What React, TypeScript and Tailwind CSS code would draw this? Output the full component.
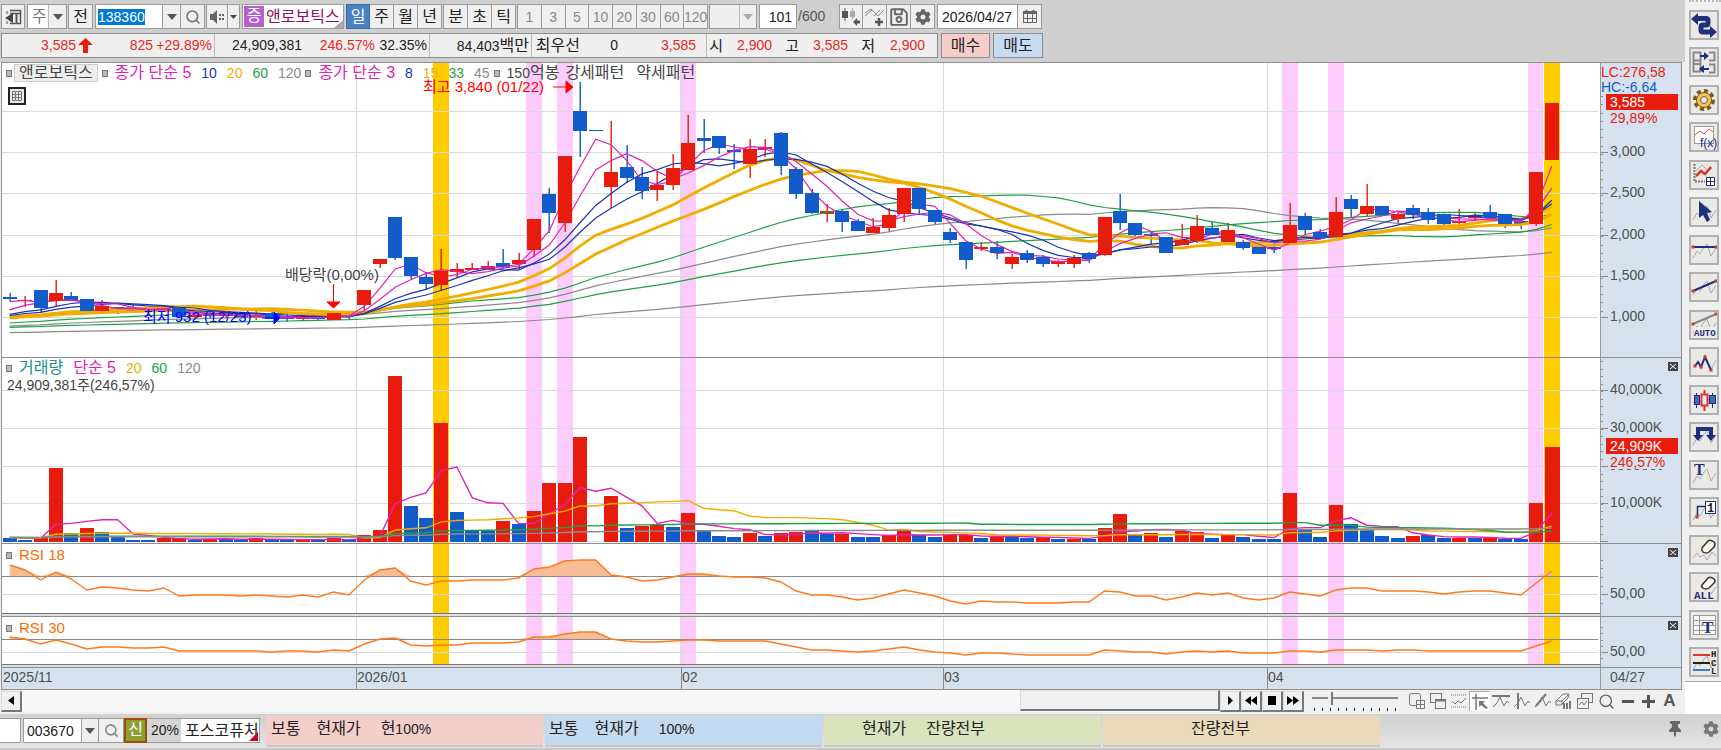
import React from 'react';
import { Search } from 'lucide-react';
import { FaCog, FaRegSave, FaThumbtack } from 'react-icons/fa';

const RED = '#e81c0c';
const BLUE = '#115bcb';

type Dir = 'r' | 'b';
type Candle = [Dir, number, number, number, number];

// direction, body top, body bottom, high, low (plot units)
const candles: Candle[] = [
  ['b', 297, 299, 293, 301], ['r', 300, 301, 296, 307], ['b', 290, 308, 290, 312], ['r', 293, 301, 280, 307],
  ['b', 296, 300, 292, 300], ['b', 299, 311, 299, 313], ['r', 306, 311, 300, 313], ['b', 307, 309, 307, 314],
  ['b', 307, 311, 304, 313], ['r', 310, 312, 309, 313], ['r', 308, 310, 305, 312], ['b', 308, 317, 308, 318],
  ['r', 315, 317, 313, 318], ['b', 313, 316, 312, 318], ['r', 313, 316, 312, 318], ['b', 314, 318, 312, 319],
  ['r', 315, 318, 308, 320], ['b', 313, 319, 309, 319], ['b', 316, 319, 314, 322], ['r', 316, 319, 315, 320],
  ['b', 315, 319, 313, 321], ['r', 313, 320, 312, 320], ['b', 314, 316, 313, 320], ['r', 290, 305, 290, 311],
  ['r', 259, 264, 259, 268], ['b', 217, 258, 217, 260], ['b', 257, 276, 257, 279], ['b', 277, 284, 272, 289],
  ['r', 271, 285, 249, 291], ['r', 269, 272, 263, 278], ['r', 268, 270, 263, 270], ['r', 266, 269, 261, 269],
  ['b', 263, 267, 249, 269], ['r', 260, 264, 253, 269], ['r', 219, 250, 219, 257], ['b', 194, 213, 188, 233],
  ['r', 156, 223, 156, 232], ['b', 111, 131, 82, 157], ['b', 130, 131, 130, 131], ['r', 172, 187, 121, 208],
  ['b', 167, 178, 145, 183], ['b', 177, 191, 167, 199], ['r', 185, 190, 171, 201], ['r', 168, 185, 154, 190],
  ['r', 143, 170, 115, 170], ['b', 138, 141, 119, 153], ['b', 136, 148, 136, 154], ['b', 150, 152, 144, 169],
  ['r', 149, 164, 139, 178], ['r', 147, 149, 139, 157], ['b', 133, 166, 132, 175], ['b', 169, 194, 167, 199],
  ['b', 193, 213, 189, 214], ['r', 211, 214, 204, 222], ['b', 211, 222, 210, 232], ['b', 221, 231, 219, 231],
  ['r', 227, 233, 218, 233], ['r', 215, 228, 208, 232], ['r', 188, 214, 188, 222], ['b', 188, 209, 188, 214],
  ['b', 210, 222, 210, 225], ['b', 232, 240, 228, 243], ['b', 242, 260, 242, 269], ['r', 247, 249, 242, 251],
  ['b', 247, 253, 241, 259], ['r', 257, 264, 254, 269], ['b', 253, 260, 250, 263], ['b', 257, 264, 255, 267],
  ['r', 261, 264, 260, 267], ['r', 258, 264, 255, 268], ['b', 253, 259, 252, 263], ['r', 217, 255, 217, 256],
  ['b', 211, 223, 194, 230], ['b', 223, 235, 223, 236], ['b', 234, 236, 231, 247], ['b', 237, 253, 237, 253],
  ['r', 240, 245, 224, 245], ['r', 226, 241, 215, 243], ['b', 228, 235, 221, 235], ['r', 230, 242, 223, 242],
  ['b', 242, 248, 240, 250], ['b', 247, 254, 246, 254], ['b', 247, 249, 244, 253], ['r', 225, 243, 203, 245],
  ['b', 216, 230, 213, 235], ['b', 232, 238, 229, 238], ['r', 212, 237, 197, 237], ['b', 199, 209, 195, 218],
  ['r', 206, 214, 184, 216], ['b', 206, 215, 206, 215], ['r', 214, 219, 211, 224], ['b', 208, 215, 205, 219],
  ['b', 212, 220, 208, 224], ['b', 214, 224, 214, 226], ['r', 221, 223, 209, 227], ['r', 216, 218, 212, 221],
  ['b', 212, 218, 205, 219], ['b', 214, 224, 214, 228], ['b', 221, 224, 219, 229], ['r', 172, 224, 172, 226],
  ['r', 103, 160, 103, 160],
];

const volumeDirs =
  'bbrrbrbbbbrrbrbbrbbrbrbrrrbbrbbbrbrrrrbrbrrbrbbbrbrrbbrbbrrbbrrbrbbrbrbrrbrbrrbrbbbrbbrbbbbrbbrbrbbrr';
const volumes = [
  4, 2, 4, 74, 9, 14, 10, 5, 2, 2, 4, 4, 2, 3, 3, 2, 4, 2, 2, 2, 2, 4, 2, 7, 12, 166, 36, 24, 119, 30, 12, 11, 21, 18,
  31, 59, 59, 105, 0, 46, 14, 16, 17, 15, 29, 12, 6, 5, 9, 6, 9, 10, 11, 8, 8, 5, 5, 7, 11, 7, 5, 7, 7, 4, 6, 5, 4, 5,
  3, 3, 3, 14, 28, 7, 9, 5, 11, 10, 4, 7, 5, 3, 3, 49, 12, 5, 37, 18, 12, 6, 4, 6, 7, 4, 4, 4, 4, 3, 3, 39, 95,
];

const rsi18 = [
  565, 570, 580, 572, 579, 590, 587, 588, 590, 591, 588, 596, 595, 595, 595, 596, 595, 596, 597, 595, 597, 592, 595,
  580, 570, 568, 581, 585, 581, 581, 580, 580, 580, 578, 569, 567, 561, 560, 560, 575, 577, 581, 580, 577, 574, 574,
  576, 577, 577, 578, 582, 591, 595, 595, 597, 600, 598, 594, 590, 593, 596, 601, 604, 601, 602, 602, 603, 603, 603,
  602, 602, 591, 592, 596, 596, 600, 597, 593, 595, 593, 598, 600, 598, 592, 594, 596, 590, 588, 588, 591, 591, 591,
  592, 594, 592, 591, 591, 593, 595, 583, 571,
];
const rsi30 = [
  637, 639, 644, 640, 644, 649, 647, 647, 648, 648, 647, 651, 651, 651, 651, 651, 651, 652, 651, 651, 652, 650, 651,
  644, 639, 638, 645, 646, 645, 645, 643, 643, 643, 642, 637, 637, 634, 632, 632, 639, 641, 642, 642, 641, 640, 640,
  641, 641, 641, 641, 644, 647, 650, 650, 651, 652, 651, 649, 647, 650, 652, 653, 655, 653, 653, 654, 655, 655, 655,
  655, 655, 650, 651, 652, 652, 654, 652, 651, 652, 651, 653, 653, 653, 651, 651, 652, 650, 650, 650, 651, 650, 650,
  651, 651, 651, 651, 651, 651, 651, 646, 641,
];

const barX = (i: number) => 9.7 + i * 15.42;
const points = (ys: number[]) => ys.map((y, i) => `${barX(i).toFixed(1)},${y.toFixed(1)}`).join(' ');

const movingAverage = (history: number[], values: number[], span: number) => {
  const all = [...history, ...values];
  return values.map((_, i) => {
    const end = history.length + i + 1;
    return all.slice(end - span, end).reduce((a, b) => a + b, 0) / span;
  });
};

const closes = candles.map(([dir, top, bottom]) => (dir === 'r' ? top : bottom));
const priceHistory = [
  ...Array(60).fill(338), ...Array(15).fill(331), ...Array(12).fill(335), ...Array(13).fill(332),
  ...Array(13).fill(320), 322, 322, 322, 322, 322, 304, 302,
];
const volumeHistory = Array(120).fill(4.5);

const priceAverages: [number, string, number][] = [
  [120, '#8a8a8a', 1], [45, '#8a8a8a', 1], [60, '#1fa045', 1], [33, '#1fa045', 1], [20, '#f0ad00', 3],
  [15, '#f0ad00', 3], [10, '#1a34b0', 1], [8, '#1a34b0', 1], [5, '#e023b5', 1], [3, '#e023b5', 1],
];
const volumeAverages: [number, string][] = [[5, '#e023b5'], [20, '#f0ad00'], [60, '#1fa045'], [120, '#8a8a8a']];

const bands: [number, string][] = [
  [28, '#ffcc00'], [34, '#fdccfd'], [36, '#fdccfd'], [44, '#fdccfd'], [83, '#fdccfd'], [86, '#fdccfd'],
  [99, '#fdccfd'], [100, '#ffcc00'],
];
const months = [
  { x: 356, label: '2026/01' },
  { x: 681, label: '02' },
  { x: 943, label: '03' },
  { x: 1267, label: '04' },
];

interface PaneProps {
  top: number;
  height: number;
  grid: number[];
  ticks: number[];
  labels: [number, string][];
  first?: boolean;
  legend: React.ReactNode;
  axis?: React.ReactNode;
  children: React.ReactNode;
}

const Pane: React.FC<PaneProps> = ({ top, height, grid, ticks, labels, first, legend, axis, children }) => (
  <div className={first ? 'flex' : 'flex border-t border-[#8e8e8e]'}>
    <div className="relative flex-1 min-w-0 bg-white">
      <svg className="block w-full" height={height} viewBox={`2 ${top} 1598 ${height}`} preserveAspectRatio="none">
        {bands.map(([i, color]) => (
          <rect key={i} x={Math.round(barX(i) - 8)} y={top} width={i === 99 ? 15 : 16} height={height} fill={color} />
        ))}
        {grid.map((y) => <rect key={y} x={2} y={y} width={1596} height={1} fill="#d9d9d9" />)}
        {months.map((m) => <rect key={m.x} x={m.x} y={top} width={1} height={height} fill="#d9d9d9" />)}
        {children}
      </svg>
      {legend}
    </div>
    <div className="relative w-[81px] shrink-0 bg-[#d6e1ef] border-l border-[#9a9a9a]">
      <svg className="block" width={80} height={height} viewBox={`1601 ${top} 80 ${height}`} fontSize={14}>
        {ticks.map((y) => <rect key={y} x={1601} y={y} width={2} height={1} fill="#8a8a8a" />)}
        {labels.map(([y, text]) => (
          <g key={y}>
            <rect x={1601} y={y} width={7} height={1} fill="#8a8a8a" />
            <text x={1610} y={y + 4} fill="#505050">{text}</text>
          </g>
        ))}
        {axis}
      </svg>
      {!first && (
        <button aria-label="닫기" className="absolute right-[3px] top-1 w-[10px] h-[9px] bg-[#444] flex items-center justify-center">
          <svg width="6" height="5" viewBox="0 0 6 5" stroke="#fff"><path d="M0 0L6 5M6 0L0 5" /></svg>
        </button>
      )}
    </div>
  </div>
);

const Box = () => <i className="block w-[6px] h-[7px] border border-[#777] bg-[#bbb] shrink-0" />;

const Rsi = ({ values, level }: { values: number[]; level: number }) => (
  <>
    <polygon
      points={`${barX(0)},${level} ${points(values.map((v) => Math.min(v, level)))} ${barX(100)},${level}`}
      fill="#f6bd97"
    />
    <rect x={2} y={level} width={1596} height={1} fill="#8a8a8a" />
    <polyline points={points(values)} fill="none" stroke="#ff7a1a" strokeWidth={1.4} />
  </>
);

const steps = (from: number, to: number, gap: number) => {
  const out: number[] = [];
  for (let y = from; y <= to; y += gap) out.push(Math.round(y));
  return out;
};

const Chart = () => (
  <section className="ml-px mr-[3px] border border-[#8e8e8e]">
    <Pane
      first
      top={63}
      height={294}
      grid={[111, 152, 193, 235, 276, 317]}
      ticks={steps(96, 317, 8.25)}
      labels={[[152, '3,000'], [193, '2,500'], [235, '2,000'], [276, '1,500'], [317, '1,000']]}
      axis={
        <>
          <text x={1601} y={77} fill={RED}>LC:276,58</text>
          <text x={1601} y={92} fill={BLUE}>HC:-6,64</text>
          <text x={1610} y={123} fill={RED}>29,89%</text>
          <rect x={1606} y={94} width={72} height={16} fill={RED} />
          <text x={1610} y={107} fill="#fff">3,585</text>
        </>
      }
      legend={
        <>
          <div className="absolute left-1 top-[2px] h-4 flex items-center whitespace-pre text-[14px] leading-4 text-[#444]">
            <Box />
            <span className="ml-[2px] mr-1 px-1 h-[18px] leading-4 border border-[#ccc] bg-[#eee] text-[16px]">앤로보틱스</span>
            <Box />
            <span className="ml-[7px] text-[16px] text-[#e023b5]">종가 단순 5</span>
            <span className="ml-[10px] text-[#1a34b0]">10</span>
            <span className="ml-[10px] text-[#f0ad00]">20</span>
            <span className="ml-[10px] text-[#1fa045]">60</span>
            <span className="ml-[10px] mr-1 text-[#8a8a8a]">120</span>
            <Box />
            <span className="ml-[7px] text-[16px] text-[#e023b5]">종가 단순 3</span>
            <span className="ml-[10px] text-[#1a34b0]">8</span>
            <span className="ml-[10px] text-[#f0ad00]">15</span>
            <span className="ml-[10px] text-[#1fa045]">33</span>
            <span className="ml-[10px] mr-1 text-[#8a8a8a]">45</span>
            <Box />
            <span className="ml-[7px]">150</span>
            <span className="text-[16px]">억봉</span>
            <span className="ml-[6px] text-[16px]">강세패턴</span>
            <span className="ml-3 text-[16px]">약세패턴</span>
          </div>
          <button aria-label="표 보기" className="absolute left-[6px] top-6 w-[18px] h-[18px] border-2 border-[#222] bg-[#e8e8e8]">
            <svg width="14" height="14" viewBox="0 0 14 14" stroke="#777" fill="none">
              <path d="M2.5 2.5H11.5V11.5H2.5ZM5.5 2V12M8.5 2V12M2 5.5H12M2 8.5H12" />
            </svg>
          </button>
        </>
      }
    >
      {candles.map(([dir, top, bottom, high, low], i) => (
        <g key={i} fill={dir === 'r' ? RED : BLUE}>
          <rect x={Math.round(barX(i)) - 0.5} y={high} width={1.4} height={low - high} />
          <rect x={Math.round(barX(i) - 7)} y={top} width={14} height={Math.max(bottom - top, 1)} />
        </g>
      ))}
      {priceAverages.map(([span, color, width]) => (
        <polyline
          key={span}
          points={points(movingAverage(priceHistory, closes, span))}
          fill="none"
          stroke={color}
          strokeWidth={width === 3 ? 2.8 : 1.2}
        />
      ))}
      {candles.map(([dir, top, bottom], i) =>
        bottom - top > 4 ? (
          <rect key={i} x={Math.round(barX(i) - 7)} y={top} width={14} height={bottom - top} fill={dir === 'r' ? RED : BLUE} />
        ) : null,
      )}
      <text x={423} y={92} fontSize={15} fill="#f00">최고 3,840 (01/22)</text>
      <path d="M553 87H567M566 81L573 87L566 93Z" fill="#f00" stroke="#f00" />
      <text x={285} y={280} fontSize={15} fill="#444">배당락(0,00%)</text>
      <path d="M333.5 284V303M327 302H340L333.5 308Z" fill="#f00" stroke="#f00" />
      <text x={143} y={322} fontSize={15} fill="#00f">최저 932 (12/23)</text>
      <path d="M262 318H275M274 312L280 318L274 324Z" fill="#00f" stroke="#00f" />
    </Pane>

    <Pane
      top={358}
      height={185}
      grid={[390, 428, 466, 503, 541]}
      ticks={steps(361, 541, 7.5)}
      labels={[[390, '40,000K'], [428, '30,000K'], [503, '10,000K']]}
      axis={
        <>
          <rect x={1606} y={438} width={72} height={16} fill={RED} />
          <text x={1610} y={451} fill="#fff">24,909K</text>
          <text x={1610} y={467} fill={RED}>246,57%</text>
          <rect x={1601} y={466} width={7} height={1} fill="#8a8a8a" />
          <path d="M1611 469.5H1662" stroke="#666" strokeDasharray="4 4" />
          <rect x={1601} y={541} width={7} height={1} fill="#8a8a8a" />
        </>
      }
      legend={
        <>
          <div className="absolute left-1 top-[2px] h-4 flex items-center text-[14px] leading-4">
            <Box />
            <span className="ml-[7px] text-[16px] text-[#209090]">거래량</span>
            <span className="ml-[10px] text-[16px] text-[#e023b5]">단순 5</span>
            <span className="ml-[10px] text-[#f0ad00]">20</span>
            <span className="ml-[10px] text-[#1fa045]">60</span>
            <span className="ml-[10px] text-[#8a8a8a]">120</span>
          </div>
          <div className="absolute left-[5px] top-[19px] text-[14px] leading-4 text-[#444]">24,909,381주(246,57%)</div>
        </>
      }
    >
      {volumes.map((h, i) => (
        <rect
          key={i}
          x={Math.round(barX(i) - 7)}
          y={542 - h}
          width={i === 100 ? 15 : 14}
          height={h}
          fill={volumeDirs[i] === 'r' ? RED : BLUE}
        />
      ))}
      {volumeAverages.map(([span, color]) => (
        <polyline
          key={span}
          points={points(movingAverage(volumeHistory, volumes, span).map((v) => 542 - v))}
          fill="none"
          stroke={color}
          strokeWidth={1.4}
        />
      ))}
    </Pane>

    <Pane
      top={544}
      height={72}
      grid={[594]}
      ticks={[560, 568, 577, 586, 603]}
      labels={[[594, '50,00']]}
      legend={
        <div className="absolute left-1 top-[3px] h-4 flex items-center gap-[7px] text-[15px] leading-4 text-[#ff6a00]">
          <Box />RSI 18
        </div>
      }
    >
      <Rsi values={rsi18} level={576} />
      <rect x={2} y={613} width={1598} height={1} fill="#777" />
      <rect x={2} y={614} width={1598} height={2} fill="#ddd" />
    </Pane>

    <Pane
      top={617}
      height={50}
      grid={[652]}
      ticks={[627, 633, 640, 646, 658]}
      labels={[[652, '50,00']]}
      legend={
        <div className="absolute left-1 top-[3px] h-4 flex items-center gap-[7px] text-[15px] leading-4 text-[#ff6a00]">
          <Box />RSI 30
        </div>
      }
    >
      <Rsi values={rsi30} level={639} />
      <rect x={2} y={664} width={1598} height={1} fill="#777" />
      <rect x={2} y={665} width={1598} height={2} fill="#ddd" />
    </Pane>

    <div className="flex border-t border-[#8e8e8e] bg-[#d6e1ef]">
      <svg className="block flex-1 min-w-0" height={21} viewBox="2 0 1598 21" preserveAspectRatio="none" fontSize={14} fill="#505050">
        <text x={3} y={14}>2025/11</text>
        {months.map((m) => (
          <g key={m.x}>
            <rect x={m.x} y={0} width={1} height={21} fill="#8a8a8a" />
            <text x={m.x + 1} y={14}>{m.label}</text>
          </g>
        ))}
      </svg>
      <div className="w-[81px] border-l border-[#9a9a9a] pl-[9px] text-[14px] leading-[19px] text-[#505050]">04/27</div>
    </div>
  </section>
);

const btn = 'h-full border border-[#9b9b9b] bg-[#efefef] flex items-center justify-center text-[16px] leading-none shrink-0';

const Arrow = ({ color = '#555' }: { color?: string }) => (
  <svg width="10" height="6" viewBox="0 0 10 6"><path d="M0 0H10L5 6Z" fill={color} /></svg>
);

const Toolbar = () => (
  <div className="h-[25px] flex text-[#222]">
    <button aria-label="패널" className={`${btn} w-6 ml-px`}>
      <svg width="17" height="18" viewBox="0 0 17 18" fill="none" stroke="#555">
        <path d="M5 2.5H15.5V15.5H5M5 5.5H15" strokeWidth="1.5" /><path d="M11.5 6V15" strokeWidth="2" />
        <path d="M0 10L8 5V15Z" fill="#444" stroke="none" /><path d="M2 3V6M2 13V16" />
      </svg>
    </button>
    <div className="relative ml-[2px] w-10 shrink-0">
      <select aria-label="종류" className="appearance-none w-full h-full border border-[#9b9b9b] bg-white pl-1 text-[16px] leading-none text-[#777]">
        <option>주</option>
      </select>
      <span className="absolute right-px top-px bottom-px w-[18px] border-l border-[#bbb] bg-[#efefef] flex items-center justify-center pointer-events-none"><Arrow /></span>
    </div>
    <button className={`${btn} w-[25px] ml-px`}>전</button>
    <div className="ml-[2px] flex h-full">
      <label className="w-[68px] h-full border border-[#9b9b9b] bg-white flex items-center pl-[2px]">
        <input aria-label="종목코드" defaultValue="138360" className="w-[47px] h-[16px] bg-[#0078d7] text-white text-[14px] leading-none" />
      </label>
      <button aria-label="목록" className={`${btn} w-[18px] border-l-0`}><Arrow /></button>
      <button aria-label="검색" className={`${btn} w-6 border-l-0`}><Search size={16} color="#777" strokeWidth={2.5} /></button>
    </div>
    <div className="ml-px flex h-full">
      <button aria-label="소리" className={`${btn} w-[22px]`}>
        <svg width="16" height="14" viewBox="0 0 16 14" fill="#666">
          <path d="M1 4H4L8 0V14L4 10H1Z" /><path d="M10 4h2v2h-2zM10 8h2v2h-2zM13 4h2v2h-2zM13 8h2v2h-2z" />
        </svg>
      </button>
      <button aria-label="소리 설정" className={`${btn} w-3 border-l-0`}>
        <svg width="7" height="4" viewBox="0 0 7 4"><path d="M0 0H7L3.5 4Z" fill="#444" /></svg>
      </button>
    </div>
    <div className="relative ml-[2px] w-[102px] border border-[#9b9b9b] bg-white flex items-center gap-[2px] shrink-0">
      <span className="ml-px w-5 h-[21px] bg-[#b65fcf] text-white text-[16px] leading-5 text-center">증</span>
      <span className="text-[16px] leading-5 text-[#8b1157] whitespace-nowrap">앤로보틱스</span>
      <svg className="absolute right-0 bottom-0" width="9" height="8" viewBox="0 0 9 8"><path d="M9 0V8H0Z" fill="#aaa" /></svg>
    </div>
    <div className="ml-[2px] flex h-full">
      <button className="w-6 h-full border border-[#3c6ba8] bg-[#4a80c4] text-white text-[16px] leading-none">일</button>
      {['주', '월', '년'].map((t) => <button key={t} className={`${btn} w-6 border-l-0`}>{t}</button>)}
    </div>
    <div className="ml-px flex h-full">
      {['분', '초', '틱'].map((t) => <button key={t} className={`${btn} w-6 border-r-0 last:border-r last:w-[25px]`}>{t}</button>)}
    </div>
    <div className="ml-px flex h-full w-[191px]">
      {['1', '3', '5', '10', '20', '30', '60', '120'].map((t) => (
        <button key={t} className="flex-1 min-w-0 h-full border border-r-0 last:border-r border-[#9b9b9b] bg-[#efefef] text-[14px] leading-none text-[#888] flex items-center justify-center">{t}</button>
      ))}
    </div>
    <div className="relative ml-px w-12 shrink-0">
      <select aria-label="주기" disabled className="appearance-none w-full h-full border border-[#9b9b9b] bg-[#efefef]"><option /></select>
      <span className="absolute right-px top-px bottom-px w-[17px] border-l border-[#bbb] flex items-center justify-center pointer-events-none"><Arrow color="#aaa" /></span>
    </div>
    <input aria-label="조회 개수" defaultValue="101" className="ml-[2px] w-[38px] h-full border border-[#9b9b9b] bg-white text-[14px] text-right pr-1" />
    <span className="w-[42px] pl-px text-[14px] leading-[25px] text-[#555]">/600</span>
    <div className="flex h-full">
      <button aria-label="봉 추가" className={`${btn} w-6`}>
        <svg width="20" height="20" viewBox="0 0 20 20" fill="#555">
          <path d="M1 4h6v7H1zM3.5 1h1v13h-1z" /><path d="M9 4h5v6H9zM11 1h1v11h-1z" fill="#aaa" /><path d="M12 15L16 11V13.5H19V16.5H16V19Z" />
        </svg>
      </button>
      <button aria-label="지표 추가" className={`${btn} w-6 border-l-0`}>
        <svg width="20" height="20" viewBox="0 0 20 20" fill="none" stroke="#888">
          <path d="M0 6L6 2L13 9L19 3M0 9L7 3M9 9L15 3" /><path d="M14 11V19M10 15H18" stroke="#555" strokeWidth="2.5" />
        </svg>
      </button>
      <button aria-label="저장" className={`${btn} w-6 border-l-0`}><FaRegSave size={20} color="#666" /></button>
      <button aria-label="설정" className={`${btn} w-6 border-l-0`}><FaCog size={16} color="#666" /></button>
    </div>
    <input aria-label="날짜" defaultValue="2026/04/27" className="ml-[2px] w-[81px] h-full border border-[#9b9b9b] bg-white text-[14px] pl-1" />
    <button aria-label="달력" className={`${btn} w-6 border-l-0`}>
      <svg width="14" height="13" viewBox="0 0 14 13" fill="none" stroke="#666">
        <path d="M0 2.5H14" strokeWidth="3" /><path d="M.5 3V12.5H13.5V3M4.5 4V12M9.500 4V12M1 8.5H13" /><path d="M3.5 0V2M10.5 0V2" strokeWidth="2" />
      </svg>
    </button>
  </div>
);

const Quote = () => (
  <div className="h-[25px] flex text-[14px] leading-[23px] text-[#222]">
    <div className="ml-px h-full border border-[#8c8c8c] bg-[#efefef] flex text-right whitespace-nowrap shrink-0 w-[937px]">
      <span className="w-[74px] text-[#e8281a]">3,585</span>
      <svg className="mt-1 ml-[2px]" width="15" height="15" viewBox="0 0 15 15"><path d="M7.5 0L15 7H10V15H5V7H0Z" fill={RED} /></svg>
      <span className="w-[60px] text-[#e8281a]">825</span>
      <span className="w-[62px] pr-[2px] border-r border-[#bbb] text-[#e8281a]">+29.89%</span>
      <span className="w-[87px]">24,909,381</span>
      <span className="w-[73px] text-[#e8281a]">246.57%</span>
      <span className="w-[55px] pr-[2px] border-r border-[#bbb]">32.35%</span>
      <span className="w-[102px] pr-[2px] border-r border-[#bbb]">84,403<span className="text-[16px]">백만</span></span>
      <span className="w-[48px] text-[16px]">최우선</span>
      <span className="w-[38px]">0</span>
      <span className="w-[89px] pr-[10px] border-r border-[#bbb] text-[#e8281a]">3,585</span>
      <span className="w-4 text-[15px]">시</span>
      <span className="w-[49px] text-[#e8281a]">2,900</span>
      <span className="w-[27px] text-[15px]">고</span>
      <span className="w-[49px] text-[#e8281a]">3,585</span>
      <span className="w-[27px] text-[15px]">저</span>
      <span className="w-[50px] text-[#e8281a]">2,900</span>
    </div>
    <button className="ml-[3px] w-[49px] border border-[#8c8c8c] bg-[#f5cec9] text-[16px] leading-none shrink-0">매수</button>
    <button className="ml-[3px] w-[50px] border border-[#8c8c8c] bg-[#c6dcf2] text-[16px] leading-none shrink-0">매도</button>
  </div>
);

const NAVY = '#1d2f7d';
const wave = <path d="M3 22L7 15L10 18L14 11L17 8L21 20L26 12" stroke="#aaa" />;
const dots = (pairs: number[][]) =>
  pairs.map(([x, y]) => <rect key={`${x}-${y}`} x={x - 1.5} y={y - 1.5} width={3} height={3} fill="#d33" stroke="none" />);

const tools: [string, React.ReactNode][] = [
  ['전환', <><path d="M7 7.5H16Q18 7.5 18 10V12Q18 14 16 14H13Q11 14 11 16V19Q11 21 13 21H21" stroke={NAVY} strokeWidth="5" /><path d="M1 8L8 2V14ZM27 21L20 15V27Z" fill={NAVY} stroke="none" /></>],
  ['교환', <><path d="M3.5 4.5H10.5V23.5H3.5ZM3 12.5H10M3 16H10M19 4.5H24.5V12.5H19M19 16.5H24.5V24.5H19" stroke="#888" strokeWidth="2" /><path d="M10 8H16M13 21H19" stroke={NAVY} strokeWidth="2" /><path d="M19 8L14 4V12ZM9 21L14 17V25Z" fill={NAVY} stroke="none" /></>],
  ['환경설정', <><circle cx="14" cy="14" r="9" stroke="#7a5a20" strokeWidth="4" strokeDasharray="4 3" /><circle cx="14" cy="14" r="7.5" fill="#f7bf55" stroke="#7a5a20" /><circle cx="14" cy="14" r="3.5" fill="#eee" stroke="#7a5a20" /></>],
  ['수식', <><rect x="4.5" y="3.5" width="19" height="17" fill="#fff" stroke="#999" /><path d="M5 12L10 8L14 11L19 6L23 9" stroke="#e55" /><text x="10" y="24" fontSize="12" fill={NAVY} stroke="none">f(x)</text></>],
  ['차트추가', <><path d="M4.5 3V20.5H15" stroke="#777" strokeWidth="2" strokeDasharray="2 1" /><path d="M6 10L12 4L18 10L22 7" stroke="#aaa" /><path d="M6 15L11 10L15 13L21 6" stroke="#d33" strokeWidth="2.5" /><path d="M16.5 16.5H24.5V24.5H16.5ZM20.5 16V25M16 20.5H25" stroke={NAVY} fill="#fff" /></>],
  ['선택', <>{wave}<path d="M9 3V20L13 17L17 24L20 22L17 15L22 14Z" fill={NAVY} stroke="none" /></>],
  ['수평선', <>{wave}<path d="M3 11H26" stroke={NAVY} strokeWidth="2" />{dots([[3, 11], [26, 11]])}</>],
  ['추세선', <>{wave}<path d="M3 18L26 8" stroke={NAVY} strokeWidth="2" />{dots([[3, 18], [26, 8]])}</>],
  ['자동추세선', <>{wave}<path d="M3 13L26 3" stroke="#888" strokeWidth="2" />{dots([[3, 13], [26, 3]])}<rect x="4" y="16" width="22" height="10" fill="#eee" stroke="none" /><text x="4" y="25" fontSize="9" fontWeight="bold" fill={NAVY} stroke="none" fontFamily="Liberation Mono">AUTO</text></>],
  ['파동', <><path d="M21 22L26 12" stroke="#aaa" /><path d="M5 18L8 14L11 19L15 9L21 22" stroke={NAVY} strokeWidth="2" />{dots([[5, 18], [11, 19], [15, 9], [21, 22]])}</>],
  ['봉', <><path d="M3 17L26 12" stroke="#aaa" /><path d="M6.500 7V22M22.500 7V22" stroke={NAVY} /><rect x="4.5" y="9.5" width="5" height="9" fill="#4866c0" stroke={NAVY} /><rect x="19.5" y="9.5" width="6" height="8" fill="#4866c0" stroke={NAVY} /><path d="M14.5 4V8M14.5 20V25M11.5 8.5H17.5V19.5H11.5Z" stroke="#d33" strokeWidth="2" fill="#eee" /></>],
  ['되돌림', <>{wave}<path d="M8 13V6H21V13" stroke={NAVY} strokeWidth="4" /><path d="M3 12H13L8 18ZM16 12H26L21 18Z" fill={NAVY} stroke="none" /></>],
  ['문자', <>{wave}<text x="4" y="14" fontSize="16" fontWeight="bold" fill={NAVY} stroke="none" fontFamily="Liberation Serif">T</text></>],
  ['번호', <>{wave}<path d="M7.5 19V8.5H16" stroke={NAVY} strokeWidth="1.5" />{dots([[7, 19]])}<rect x="15.5" y="3.5" width="10" height="12" fill="#fff" stroke={NAVY} /><text x="17" y="14" fontSize="12" fontWeight="bold" fill="#222" stroke="none" fontFamily="Liberation Mono">1</text></>],
  ['지우개', <><path d="M3 22L7 17L10 21L14 19L17 24L22 16L26 20" stroke="#aaa" /><path d="M12 12L18 5Q20 3 24 6Q26 8 24 11L19 16Q16 18 13 16Q11 14 12 12Z" fill="#fffdf0" stroke="#333" strokeWidth="1.5" /></>],
  ['모두 지우기', <><path d="M12 12L18 5Q20 3 24 6Q26 8 24 10L19 15Q16 17 13 15Q11 14 12 12Z" fill="#fffdf0" stroke="#333" strokeWidth="1.5" /><path d="M21 21L26 14" stroke="#aaa" /><text x="4" y="26" fontSize="11" fontWeight="bold" fill={NAVY} stroke="none" fontFamily="Liberation Mono">ALL</text></>],
  ['표', <><path d="M3.5 4.5H25.5V23.5H3.5ZM3 9.5H25M3 14.5H25M3 19.5H25M9.5 4V23" stroke="#999" fill="#f8f8f8" /><text x="12" y="22" fontSize="17" fontWeight="bold" fill={NAVY} stroke="none" fontFamily="Liberation Serif">T</text></>],
  ['고저종', <>{wave}<path d="M3 7H20" stroke="#d33" strokeWidth="2" /><path d="M3 15H20" stroke="#222" strokeWidth="2" /><path d="M3 22H20" stroke="#3c7fc0" strokeWidth="2" /><text fontSize="9" fontWeight="bold" fill="#222" stroke="none" fontFamily="Liberation Mono"><tspan x="21" y="9">H</tspan><tspan x="21" y="18">C</tspan><tspan x="21" y="26">L</tspan></text></>],
];

const SideTools = () => (
  <aside className="w-9 shrink-0 flex flex-col bg-[#f0f0f0]">
    <div className="relative flex-1 pt-[10px] pb-1 pl-1 flex flex-col justify-between border-b border-[#aaa]">
      <i className="absolute left-1 right-0 top-0 border-t-2 border-dotted border-[#bbb]" />
      {tools.map(([name, icon]) => (
        <button key={name} aria-label={name} className="w-[30px] h-[30px] border-2 border-[#b0b0b0] bg-[#eae9e6]">
          <svg width="26" height="26" viewBox="1 1 26 26" fill="none">{icon}</svg>
        </button>
      ))}
    </div>
    <div className="h-8 bg-white" />
  </aside>
);

const miniWave = <path d="M1 15L5 11L8 5L12 14L15 9L17 11" />;
const miniIcons: [string, React.ReactNode][] = [
  ['새 창', <><rect x="1.5" y="1.5" width="11" height="12" rx="2" /><path d="M8.5 8.5H16.5V16.5H8.5ZM12.5 8V17M8 12.5H17" fill="#f0f0f0" /></>],
  ['창 복제', <><rect x="1.5" y="1.5" width="11" height="9" /><rect x="6.5" y="7.5" width="10" height="9" fill="#f0f0f0" /><path d="M6 8.5H17" strokeWidth="2" /></>],
  ['구간', <><path d="M1 3H17M1 15H17" strokeDasharray="1 1" /><path d="M2 9L5 12L8 9L11 11L16 6" /></>],
  ['십자선', <><path d="M1 5H17M5 1V17" strokeWidth="1.5" /><path d="M8 8H14L12 10L17 15L15 16L10 12L8 14Z" fill="#777" stroke="none" /></>],
  ['가로선', <><path d="M0 4H18" strokeWidth="2" />{miniWave}</>],
  ['세로선', <><path d="M5 1V17" strokeWidth="2" />{miniWave}</>],
  ['사선', <><path d="M2 14L12 2" strokeWidth="2" />{miniWave}</>],
  ['전체 삭제', <><path d="M1 9L8 2H14L13 6L6 13H1ZM1 9H7L13 3M7 9V13" /><path d="M9 11V17M12 11V17M15 9V17" strokeWidth="2" /></>],
  ['겹쳐보기', <><rect x="5.5" y="1.5" width="11" height="9" /><rect x="1.5" y="6.5" width="11" height="10" fill="#f0f0f0" /><path d="M3 13L6 10L8 13L11 9" /></>],
];

const ScrollRow = () => (
  <div className="ml-px mr-[3px] pr-[2px] h-6 pb-[2px] flex items-center bg-[#f0f0f0]">
    <button aria-label="왼쪽" className="w-[21px] h-[21px] border border-[#ddd] border-r-[#777] border-b-[#777] border-r-2 border-b-2 flex items-center justify-center">
      <svg width="6" height="9" viewBox="0 0 6 9"><path d="M6 0V9L0 4.5Z" /></svg>
    </button>
    <div className="flex-1 h-full bg-[#f8f8f8] flex justify-end">
      <div className="w-[200px] h-[21px] border border-[#ddd] border-r-2 border-b-2 border-r-[#777] border-b-[#777] bg-[#f0f0f0]" />
    </div>
    {[
      ['재생', 'M4 0V9L9 4.5Z'],
      ['뒤로', 'M6 0V9L0 4.5ZM12 0V9L6 4.5Z'],
      ['정지', 'M2 0H10V9H2Z'],
      ['앞으로', 'M0 0V9L6 4.5ZM6 0V9L12 4.5Z'],
    ].map(([name, d]) => (
      <button key={name} aria-label={name} className="w-[21px] h-[21px] border border-[#ddd] border-r-2 border-b-2 border-r-[#777] border-b-[#777] flex items-center justify-center">
        <svg width="12" height="9" viewBox="0 0 12 9"><path d={d} /></svg>
      </button>
    ))}
    <div className="ml-2 w-[86px] h-[20px] flex flex-col justify-between">
      <input
        type="range"
        aria-label="속도"
        min={0}
        max={10}
        defaultValue={2}
        className="block w-full h-[14px] appearance-none bg-transparent [&::-webkit-slider-runnable-track]:h-[2px] [&::-webkit-slider-runnable-track]:bg-[#888] [&::-webkit-slider-thumb]:appearance-none [&::-webkit-slider-thumb]:w-[5px] [&::-webkit-slider-thumb]:h-[13px] [&::-webkit-slider-thumb]:-mt-[5px] [&::-webkit-slider-thumb]:bg-[#eee] [&::-webkit-slider-thumb]:border-r-2 [&::-webkit-slider-thumb]:border-[#777]"
      />
      <div className="flex justify-between px-[2px]">
        {steps(0, 10, 1).map((n) => <i key={n} className="w-px h-[3px] bg-[#222]" />)}
      </div>
    </div>
    <div className="ml-2 flex items-center">
      {miniIcons.map(([name, icon]) => (
        <button key={name} aria-label={name} className={name === '십자선' ? 'w-[21px] h-5 bg-white border-t border-l border-[#aaa]' : 'w-[21px] h-5'}>
          <svg className="m-auto" width="18" height="18" viewBox="0 0 18 18" fill="none" stroke="#777">{icon}</svg>
        </button>
      ))}
      <button aria-label="확대경" className="w-[22px]"><Search className="m-auto" size={17} color="#666" /></button>
      <button aria-label="축소" className="w-[21px]"><svg className="m-auto" width="12" height="12" viewBox="0 0 12 12"><path d="M0 5H12V8H0Z" fill="#555" /></svg></button>
      <button aria-label="확대" className="w-[21px]"><svg className="m-auto" width="13" height="13" viewBox="0 0 13 13"><path d="M0 5H13V8H0ZM5 0H8V13H5Z" fill="#555" /></svg></button>
      <button className="w-[21px] text-[17px] leading-5 font-bold text-[#555]">A</button>
    </div>
  </div>
);

const OrderBar = () => (
  <footer className="h-9 flex items-start pt-[2px] bg-linear-to-b from-[#d0d0d0] to-[#e4e4e4] border-b-2 border-[#c8c8c8] text-[14px] text-[#222]">
    <div className="mt-[2px] w-[21px] h-[25px] border border-l-0 border-[#9b9b9b] bg-white shrink-0" />
    <div className="mt-[2px] ml-[2px] h-[25px] flex shrink-0">
      <input aria-label="주문 종목" defaultValue="003670" className="w-[59px] h-full border border-[#9b9b9b] bg-white pl-[3px]" />
      <button aria-label="종목 목록" className={`${btn} w-[17px] border-l-0`}><Arrow /></button>
      <button aria-label="종목 검색" className={`${btn} w-[25px] border-l-0`}><Search size={15} color="#888" strokeWidth={2.5} /></button>
      <span className="w-[23px] h-full border-2 border-[#a04a10] bg-[#8f9f30] text-white text-[16px] leading-5 text-center">신</span>
      <div className="relative w-[113px] h-full border border-l-0 border-[#9b9b9b] bg-white flex overflow-hidden whitespace-nowrap leading-[23px]">
        <span className="w-[34px] pl-1 bg-[#d4d4d4] shrink-0">20%</span>
        <span className="pl-1 text-[16px]">포스코퓨처</span>
        <svg className="absolute right-px bottom-px" width="9" height="9" viewBox="0 0 9 9"><path d="M9 0V9H0Z" fill="#d0021b" /></svg>
      </div>
    </div>
    <div className="ml-[6px] flex gap-[2px] h-[31px] leading-[26px] text-[16px] whitespace-pre">
      <div className="w-[277px] pl-[5px] bg-[#f4cfca] border-b-2 border-[#c8c8c8] flex gap-4">
        <span>보통</span><span>현재가</span><span className="ml-1">현<span className="text-[14px]">100%</span></span>
      </div>
      <div className="w-[277px] pl-1 bg-[#c4daf1] border-b-2 border-[#c8c8c8] flex gap-4">
        <span>보통</span><span>현재가</span><span className="ml-1 text-[14px]">100%</span>
      </div>
      <div className="w-[277px] pl-[38px] bg-[#d9e3be] border-b-2 border-[#c8c8c8] flex gap-5">
        <span>현재가</span><span>잔량전부</span>
      </div>
      <div className="w-[277px] pl-[88px] bg-[#ead9bb] border-b-2 border-[#c8c8c8]">잔량전부</div>
    </div>
    <div className="ml-auto mt-[5px] mr-[2px] flex gap-5">
      <button aria-label="고정"><FaThumbtack size={16} color="#666" /></button>
      <button aria-label="주문 설정"><FaCog size={16} color="#777" /></button>
    </div>
  </footer>
);

export default function App() {
  return (
    <div className="w-full bg-[#cfcfcf] overflow-hidden font-['Liberation_Sans','Noto_Sans_CJK_KR',sans-serif]">
      <div className="flex">
        <main className="flex-1 min-w-0 bg-[#f0f0f0]">
          <header className="bg-[#cfcfcf] py-1 flex flex-col gap-1">
            <Toolbar />
            <Quote />
          </header>
          <Chart />
          <ScrollRow />
        </main>
        <SideTools />
      </div>
      <OrderBar />
    </div>
  );
}
